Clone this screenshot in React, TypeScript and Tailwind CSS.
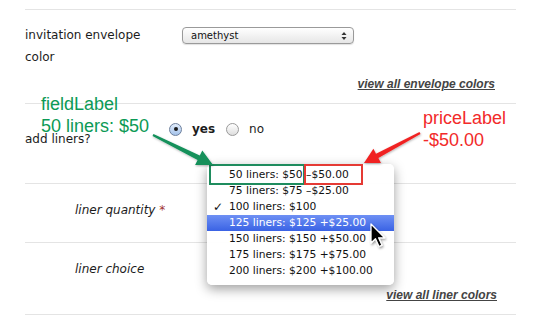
export default function App() {
  const items = [
    "50 liners: $50 –$50.00",
    "75 liners: $75 –$25.00",
    "100 liners: $100",
    "125 liners: $125 +$25.00",
    "150 liners: $150 +$50.00",
    "175 liners: $175 +$75.00",
    "200 liners: $200 +$100.00",
  ];
  return (
    <div className="relative w-[555px] h-[319px] overflow-hidden bg-white text-[#1c1c1c] font-['DejaVu_Sans',sans-serif] text-[12px]">
      <div className="ml-[25px] w-[491px] pt-[9px]">
        {/* row 1 */}
        <div className="h-[94px] border-t border-[#e4e4e4] pt-[14px] flex flex-col">
          <div className="flex items-start">
            <div className="w-[157px] leading-[22px]">
              invitation envelope
              <br />
              color
            </div>
            <div className="mt-[3px] w-[172px] h-[17px] rounded-[4px] border border-[#9a9a9a] bg-linear-to-b from-white to-[#e6e6e6] flex items-center justify-between pl-[8px] pr-[6px] shadow-[0_1px_1px_rgba(0,0,0,0.12)]">
              <span className="text-[10px] leading-[15px] text-[#111]">amethyst</span>
              <svg width="6" height="10" viewBox="0 0 6 10">
                <path d="M3 1 L5.5 4 L0.5 4 Z" fill="#333" />
                <path d="M3 9 L5.5 6 L0.5 6 Z" fill="#333" />
              </svg>
            </div>
          </div>
          <a className="mt-[9px] mr-[21px] self-end font-['Liberation_Sans',Arial,sans-serif] font-bold italic underline text-[12px] leading-[14px] text-[#444]">
            view all envelope colors
          </a>
        </div>
        {/* row 2 */}
        <div className="h-[80px] border-t border-[#e4e4e4] flex items-start">
          <div className="w-[144px] pt-[24px] leading-[22px]">add liners?</div>
          <div className="mt-[14px] h-[22px] flex items-center">
            <span className="w-[13px] h-[13px] rounded-full border border-[#6d7f9c] bg-linear-to-b from-[#e2edfb] to-[#a4c2ea] flex items-center justify-center">
              <span className="w-[4px] h-[4px] rounded-full bg-[#1a1a1a]" />
            </span>
            <span className="ml-[10px] font-bold leading-[22px]">yes</span>
            <span className="ml-[11px] w-[13px] h-[13px] rounded-full border border-[#9a9a9a] bg-linear-to-b from-white to-[#dedede]" />
            <span className="ml-[10px] leading-[22px]">no</span>
          </div>
        </div>
        {/* row 3 */}
        <div className="h-[59px] border-t border-[#e4e4e4] pt-[15px] pl-[50px] italic leading-[22px]">
          liner quantity <span className="text-[#a03030]">*</span>
        </div>
        {/* row 4 */}
        <div className="h-[72px] border-t border-[#e4e4e4] pt-[15px] flex flex-col">
          <div className="pl-[50px] italic leading-[22px]">liner choice</div>
          <a className="mt-[8px] mr-[19px] self-end font-['Liberation_Sans',Arial,sans-serif] font-bold italic underline text-[12px] leading-[14px] text-[#444]">
            view all liner colors
          </a>
        </div>
        <div className="border-t border-[#e4e4e4]" />
      </div>

      {/* annotations */}
      <div className="absolute left-[41px] top-[93px] font-['Liberation_Sans',Arial,sans-serif] text-[18px] leading-[22px] text-[#0c9a56]">
        fieldLabel
        <br />
        50 liners: $50
      </div>
      <div className="absolute left-[423px] top-[107px] font-['Liberation_Sans',Arial,sans-serif] text-[18px] leading-[22px] text-[#f22a2a]">
        priceLabel
        <br />
        -$50.00
      </div>

      {/* dropdown menu */}
      <div className="absolute left-[207px] top-[164px] w-[187px] h-[121px] rounded-[5px] bg-white/95 shadow-[0_4px_12px_rgba(0,0,0,0.38)] pt-[3px] text-[10.7px] text-[#111]">
        {items.map((t, i) => (
          <div
            key={t}
            className={
              i === 3
                ? "relative h-[16px] leading-[16px] pl-[22px] text-white bg-linear-to-b from-[#6f90f4] to-[#3a62e4]"
                : "relative h-[16px] leading-[16px] pl-[22px]"
            }
          >
            {i === 2 && (
              <span className="absolute left-[6px] top-0 text-[12px] font-bold">✓</span>
            )}
            {t}
          </div>
        ))}
      </div>

      {/* highlight boxes */}
      <div className="absolute left-[209px] top-[164px] w-[96px] h-[21px] border-2 border-[#1f8c5e]" />
      <div className="absolute left-[304px] top-[164px] w-[59px] h-[21px] border-2 border-[#e53a34]" />

      {/* arrows */}
      <svg className="absolute left-0 top-0" width="555" height="319" viewBox="0 0 555 319">
        <defs>
          <filter id="sh" x="-20%" y="-20%" width="140%" height="140%">
            <feDropShadow dx="0.5" dy="1" stdDeviation="0.8" floodColor="#000" floodOpacity="0.3" />
          </filter>
        </defs>
        <polygon
          filter="url(#sh)"
          fill="#12905a"
          points="153.45,134.1 199.8,155.6 202.3,150.6 213,165 195.1,165 197.6,160 152.55,135.9"
        />
        <polygon
          filter="url(#sh)"
          fill="#f02424"
          points="419.5,132.1 376,153.7 373.4,148.8 364,163 381,163 378.4,158.1 420.5,133.9"
        />
      </svg>

      {/* cursor */}
      <svg className="absolute left-[369px] top-[222px]" width="22" height="30" viewBox="0 0 22 30">
        <defs>
          <filter id="cs" x="-30%" y="-30%" width="160%" height="160%">
            <feDropShadow dx="1" dy="1.5" stdDeviation="1" floodColor="#000" floodOpacity="0.4" />
          </filter>
        </defs>
        <path
          filter="url(#cs)"
          d="M2 2 L2 21 L6.5 16.8 L10 24.5 L13 23.2 L9.6 15.8 L15.6 15.8 Z"
          fill="#000"
          stroke="#fff"
          strokeWidth="1.3"
          strokeLinejoin="round"
        />
      </svg>
    </div>
  );
}
